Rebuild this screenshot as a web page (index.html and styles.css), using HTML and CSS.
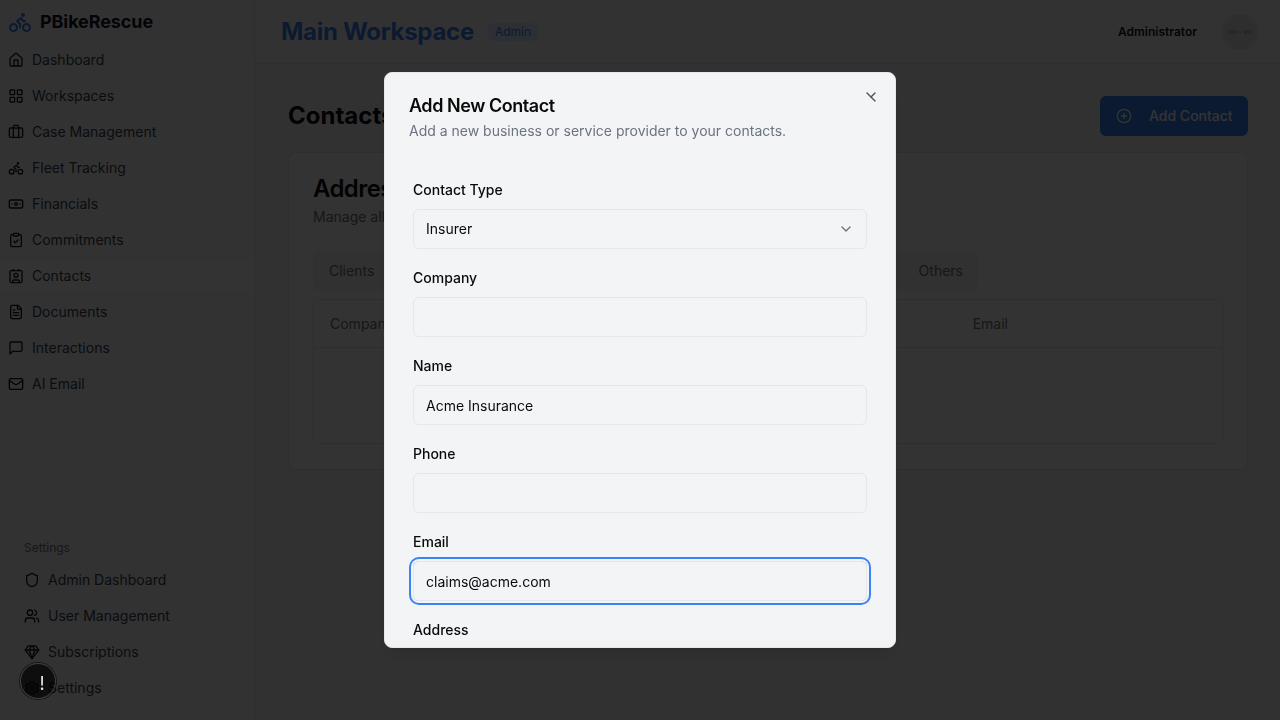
FILE: index.html
```html
<!DOCTYPE html>
<html lang="en">
<head>
    <meta charset="UTF-8">
    <title>Contacts</title>
    <link rel="stylesheet" href="styles.css">
</head>
<body>
<svg class="defs" width="0" height="0">
    <symbol id="i-house" viewBox="0 0 24 24"><path d="M15 21v-8a1 1 0 0 0-1-1h-4a1 1 0 0 0-1 1v8"/><path d="M3 10a2 2 0 0 1 .709-1.528l7-5.999a2 2 0 0 1 2.582 0l7 5.999A2 2 0 0 1 21 10v9a2 2 0 0 1-2 2H5a2 2 0 0 1-2-2z"/></symbol>
    <symbol id="i-grid" viewBox="0 0 24 24"><rect width="7" height="7" x="3" y="3" rx="1"/><rect width="7" height="7" x="14" y="3" rx="1"/><rect width="7" height="7" x="14" y="14" rx="1"/><rect width="7" height="7" x="3" y="14" rx="1"/></symbol>
    <symbol id="i-case" viewBox="0 0 24 24"><path d="M16 20V4a2 2 0 0 0-2-2h-4a2 2 0 0 0-2 2v16"/><rect width="20" height="14" x="2" y="6" rx="2"/></symbol>
    <symbol id="i-bike" viewBox="0 0 24 24"><circle cx="18.5" cy="17.5" r="3.5"/><circle cx="5.5" cy="17.5" r="3.5"/><circle cx="15" cy="5" r="1"/><path d="M12 17.5V14l-3-3 4-3 2 3h2"/></symbol>
    <symbol id="i-note" viewBox="0 0 24 24"><rect width="20" height="12" x="2" y="6" rx="2"/><circle cx="12" cy="12" r="2"/><path d="M6 12h.01M18 12h.01"/></symbol>
    <symbol id="i-check" viewBox="0 0 24 24"><rect width="8" height="4" x="8" y="2" rx="1"/><path d="M16 4h2a2 2 0 0 1 2 2v14a2 2 0 0 1-2 2H6a2 2 0 0 1-2-2V6a2 2 0 0 1 2-2h2"/><path d="m9 14 2 2 4-4"/></symbol>
    <symbol id="i-contact" viewBox="0 0 24 24"><path d="M16 2v2"/><path d="M7 22v-2a2 2 0 0 1 2-2h6a2 2 0 0 1 2 2v2"/><path d="M8 2v2"/><circle cx="12" cy="11" r="3"/><rect width="18" height="18" x="3" y="4" rx="2"/></symbol>
    <symbol id="i-file" viewBox="0 0 24 24"><path d="M15 2H6a2 2 0 0 0-2 2v16a2 2 0 0 0 2 2h12a2 2 0 0 0 2-2V7Z"/><path d="M14 2v4a2 2 0 0 0 2 2h4"/><path d="M10 9H8"/><path d="M16 13H8"/><path d="M16 17H8"/></symbol>
    <symbol id="i-message" viewBox="0 0 24 24"><path d="M21 15a2 2 0 0 1-2 2H7l-4 4V5a2 2 0 0 1 2-2h14a2 2 0 0 1 2 2z"/></symbol>
    <symbol id="i-mail" viewBox="0 0 24 24"><rect width="20" height="16" x="2" y="4" rx="2"/><path d="m22 7-8.97 5.7a1.94 1.94 0 0 1-2.06 0L2 7"/></symbol>
    <symbol id="i-shield" viewBox="0 0 24 24"><path d="M20 13c0 5-3.5 7.5-7.66 8.95a1 1 0 0 1-.67-.01C7.5 20.5 4 18 4 13V6a1 1 0 0 1 1-1c2 0 4.5-1.2 6.24-2.72a1.17 1.17 0 0 1 1.52 0C14.51 3.81 17 5 19 5a1 1 0 0 1 1 1z"/></symbol>
    <symbol id="i-users" viewBox="0 0 24 24"><path d="M16 21v-2a4 4 0 0 0-4-4H6a4 4 0 0 0-4 4v2"/><circle cx="9" cy="7" r="4"/><path d="M22 21v-2a4 4 0 0 0-3-3.87"/><path d="M16 3.13a4 4 0 0 1 0 7.75"/></symbol>
    <symbol id="i-gem" viewBox="0 0 24 24"><path d="M6 3h12l4 6-10 13L2 9Z"/><path d="M11 3 8 9l4 13 4-13-3-6"/><path d="M2 9h20"/></symbol>
    <symbol id="i-gear" viewBox="0 0 24 24"><path d="M12.22 2h-.44a2 2 0 0 0-2 2v.18a2 2 0 0 1-1 1.73l-.43.25a2 2 0 0 1-2 0l-.15-.08a2 2 0 0 0-2.73.73l-.22.38a2 2 0 0 0 .73 2.73l.15.1a2 2 0 0 1 1 1.72v.51a2 2 0 0 1-1 1.74l-.15.09a2 2 0 0 0-.73 2.73l.22.38a2 2 0 0 0 2.73.73l.15-.08a2 2 0 0 1 2 0l.43.25a2 2 0 0 1 1 1.73V20a2 2 0 0 0 2 2h.44a2 2 0 0 0 2-2v-.18a2 2 0 0 1 1-1.73l.43-.25a2 2 0 0 1 2 0l.15.08a2 2 0 0 0 2.73-.73l.22-.39a2 2 0 0 0-.73-2.73l-.15-.08a2 2 0 0 1-1-1.74v-.5a2 2 0 0 1 1-1.74l.15-.09a2 2 0 0 0 .73-2.73l-.22-.38a2 2 0 0 0-2.73-.73l-.15.08a2 2 0 0 1-2 0l-.43-.25a2 2 0 0 1-1-1.73V4a2 2 0 0 0-2-2z"/><circle cx="12" cy="12" r="3"/></symbol>
    <symbol id="i-plus" viewBox="0 0 24 24"><circle cx="12" cy="12" r="10"/><path d="M8 12h8"/><path d="M12 8v8"/></symbol>
    <symbol id="i-x" viewBox="0 0 24 24"><path d="M18 6 12 12"/><path d="m6 6 12 12"/></symbol>
    <symbol id="i-chevron" viewBox="0 0 24 24"><path d="m6 9 6 6 6-6"/></symbol>
</svg>

<div class="app">
    <aside class="sidebar">
        <div class="brand">
            <svg class="icon brand-icon"><use href="#i-bike"/></svg>
            <span>PBikeRescue</span>
        </div>
        <nav class="nav">
            <a class="nav-item"><svg class="icon"><use href="#i-house"/></svg>Dashboard</a>
            <a class="nav-item"><svg class="icon"><use href="#i-grid"/></svg>Workspaces</a>
            <a class="nav-item"><svg class="icon"><use href="#i-case"/></svg>Case Management</a>
            <a class="nav-item"><svg class="icon"><use href="#i-bike"/></svg>Fleet Tracking</a>
            <a class="nav-item"><svg class="icon"><use href="#i-note"/></svg>Financials</a>
            <a class="nav-item"><svg class="icon"><use href="#i-check"/></svg>Commitments</a>
            <a class="nav-item active"><svg class="icon"><use href="#i-contact"/></svg>Contacts</a>
            <a class="nav-item"><svg class="icon"><use href="#i-file"/></svg>Documents</a>
            <a class="nav-item"><svg class="icon"><use href="#i-message"/></svg>Interactions</a>
            <a class="nav-item"><svg class="icon"><use href="#i-mail"/></svg>AI Email</a>
        </nav>
        <div class="nav-settings">
            <div class="nav-label">Settings</div>
            <nav class="nav">
                <a class="nav-item"><svg class="icon"><use href="#i-shield"/></svg>Admin Dashboard</a>
                <a class="nav-item"><svg class="icon"><use href="#i-users"/></svg>User Management</a>
                <a class="nav-item"><svg class="icon"><use href="#i-gem"/></svg>Subscriptions</a>
                <a class="nav-item"><svg class="icon"><use href="#i-gear"/></svg>Settings</a>
            </nav>
        </div>
    </aside>

    <div class="page">
        <header class="topbar">
            <h1 class="workspace">Main Workspace</h1>
            <span class="badge">Admin</span>
            <span class="user">Administrator</span>
            <span class="avatar">100 × 100</span>
        </header>
        <main class="content">
            <div class="content-head">
                <h2 class="content-title">Contacts</h2>
                <button class="add-btn"><svg class="icon"><use href="#i-plus"/></svg>Add Contact</button>
            </div>
            <section class="card">
                <h3 class="card-title">Address Book</h3>
                <p class="card-desc">Manage all your contacts in one place.</p>
                <div class="tabs">
                    <span class="tab">Clients</span>
                    <span class="tab">Others</span>
                </div>
                <div class="table">
                    <div class="table-head">
                        <span>Company</span>
                        <span>Email</span>
                    </div>
                    <div class="table-body"></div>
                </div>
            </section>
        </main>
    </div>
</div>

<div class="overlay"></div>

<div class="modal">
    <svg class="icon modal-close"><use href="#i-x"/></svg>
    <h2 class="modal-title">Add New Contact</h2>
    <p class="modal-desc">Add a new business or service provider to your contacts.</p>
    <form class="form">
        <div class="field">
            <label class="field-label">Contact Type</label>
            <div class="input select">Insurer<svg class="icon"><use href="#i-chevron"/></svg></div>
        </div>
        <div class="field">
            <label class="field-label">Company</label>
            <div class="input"></div>
        </div>
        <div class="field">
            <label class="field-label">Name</label>
            <div class="input">Acme Insurance</div>
        </div>
        <div class="field">
            <label class="field-label">Phone</label>
            <div class="input"></div>
        </div>
        <div class="field">
            <label class="field-label">Email</label>
            <div class="input focused">claims@acme.com</div>
        </div>
        <div class="field">
            <label class="field-label">Address</label>
            <div class="input"></div>
        </div>
    </form>
</div>

<div class="issues"><span>!</span></div>
</body>
</html>
```

FILE: styles.css
```css
* {
    margin: 0;
    padding: 0;
    box-sizing: border-box;
}
html, body {
    height: 100%;
    overflow: hidden;
}
body {
    background: #f3f4f6;
    color: #0a0a0a;
    font-family: Inter, "Liberation Sans", sans-serif;
    font-size: 14px;
    line-height: 20px;
}
.defs {
    position: absolute;
}
.icon {
    width: 16px;
    height: 16px;
    flex: none;
    fill: none;
    stroke: currentColor;
    stroke-width: 2;
    stroke-linecap: round;
    stroke-linejoin: round;
}

/* layout */
.app {
    display: flex;
    height: 720px;
}
.sidebar {
    display: flex;
    flex-direction: column;
    width: 255px;
    height: 720px;
    flex: none;
    padding-bottom: 16px;
    border-right: 1px solid #e5e7eb;
    background: #f9fafb;
}
.brand {
    display: flex;
    align-items: center;
    gap: 8px;
    height: 44px;
    padding-left: 8px;
    font-size: 18px;
    font-weight: 700;
    letter-spacing: -0.1px;
    color: #111827;
}
.brand-icon {
    width: 24px;
    height: 24px;
    color: #3b82f6;
}
.nav {
    display: flex;
    flex-direction: column;
    gap: 4px;
}
.nav-item {
    display: flex;
    align-items: center;
    gap: 8px;
    height: 32px;
    padding-left: 8px;
    color: #374151;
}
.nav-item .icon {
    color: #111827;
}
.nav-item.active {
    background: #ffffff;
}
.nav-settings {
    margin-top: auto;
    padding-left: 16px;
}
.nav-label {
    height: 16px;
    margin-bottom: 8px;
    padding-left: 8px;
    font-size: 12px;
    line-height: 16px;
    color: #6b7280;
}

/* header */
.page {
    flex: 1;
    min-width: 0;
}
.topbar {
    display: flex;
    align-items: center;
    height: 64px;
    padding: 0 22px 0 26px;
    border-bottom: 1px solid #e5e7eb;
    background: #f9fafb;
}
.workspace {
    font-size: 24px;
    line-height: 32px;
    font-weight: 700;
    letter-spacing: -0.3px;
    color: #3b82f6;
}
.badge {
    margin-left: 14px;
    padding: 0 7px;
    border-radius: 6px;
    background: #dbeafe;
    font-size: 12px;
    line-height: 18px;
    color: #3b82f6;
}
.user {
    margin-left: auto;
    padding: 0 10px;
    border: 1px solid #f0f1f3;
    border-radius: 11px;
    font-size: 12px;
    line-height: 20px;
    font-weight: 600;
    color: #111827;
}
.avatar {
    display: flex;
    align-items: center;
    justify-content: center;
    width: 36px;
    height: 36px;
    margin-left: 14px;
    border-radius: 50%;
    background: #e5e7eb;
    font-size: 5px;
    color: #6b7280;
}

/* page content */
.content {
    padding: 32px 32px 0 33px;
}
.content-head {
    display: flex;
    align-items: center;
    justify-content: space-between;
    height: 40px;
    margin-bottom: 16px;
}
.content-title {
    font-size: 24px;
    line-height: 32px;
    font-weight: 700;
}
.add-btn {
    display: flex;
    align-items: center;
    gap: 17px;
    width: 148px;
    height: 40px;
    padding-left: 16px;
    border: 0;
    border-radius: 6px;
    background: #3b82f6;
    color: #fff;
    font: 500 14px/20px Inter, "Liberation Sans", sans-serif;
}
.card {
    height: 318px;
    padding: 24px;
    border: 1px solid #e5e7eb;
    border-radius: 8px;
    background: #ffffff;
}
.card-title {
    font-size: 24px;
    line-height: 24px;
    font-weight: 600;
    letter-spacing: -0.6px;
}
.card-desc {
    margin-top: 6px;
    color: #6b7280;
}
.tabs {
    display: flex;
    justify-content: space-between;
    width: 665px;
    height: 40px;
    margin-top: 24px;
    padding: 0 15px 0 16px;
    border-radius: 6px;
    background: #f3f4f6;
    line-height: 40px;
}
.tab {
    color: #6b7280;
}
.table {
    height: 145px;
    margin-top: 8px;
    border: 1px solid #e5e7eb;
    border-radius: 6px;
}
.table-head {
    display: flex;
    justify-content: space-between;
    height: 48px;
    padding: 0 214px 0 16px;
    border-bottom: 1px solid #e5e7eb;
    line-height: 48px;
    color: #6b7280;
}

/* backdrop */
.overlay {
    position: fixed;
    top: 0;
    left: 0;
    width: 100%;
    height: 100%;
    background: rgba(0, 0, 0, 0.8);
}

/* dialog */
.modal {
    position: fixed;
    top: 72px;
    left: 384px;
    width: 512px;
    height: 576px;
    padding: 19px 24px;
    overflow: hidden;
    border: 1px solid #e5e7eb;
    border-radius: 8px;
    background: #f3f4f6;
    box-shadow: 0 10px 15px -3px rgba(0, 0, 0, 0.1);
}
.modal-close {
    position: absolute;
    top: 16px;
    right: 16px;
    color: #4b5563;
}
.modal-title {
    font-size: 18px;
    line-height: 28px;
    font-weight: 600;
    letter-spacing: -0.45px;
    color: #0a0a0a;
}
.modal-desc {
    margin-top: 1px;
    color: #6b7280;
}
.form {
    display: flex;
    flex-direction: column;
    gap: 19px;
    margin-top: 39px;
    padding: 0 4px;
}
.field-label {
    display: block;
    margin-bottom: 9px;
    font-weight: 500;
    color: #0a0a0a;
}
.input {
    display: flex;
    align-items: center;
    justify-content: space-between;
    height: 40px;
    padding: 2px 12px 0;
    border: 1px solid #e5e7eb;
    border-radius: 6px;
    color: #0a0a0a;
}
.select {
    padding-top: 0;
}
.select .icon {
    color: #6b7280;
}
.input.focused {
    box-shadow: 0 0 0 2px #f3f4f6, 0 0 0 4px #3b82f6;
}

/* dev issues button */
.issues {
    position: fixed;
    left: 20px;
    top: 663px;
    display: flex;
    align-items: center;
    justify-content: center;
    width: 36px;
    height: 36px;
    padding: 6px 0 0 8px;
    border: 1px solid #3f3f3f;
    border-radius: 50%;
    background: rgba(0, 0, 0, 0.72);
    box-shadow: 0 0 0 1px rgba(0, 0, 0, 0.6);
    color: #e8e8e8;
    font-size: 18px;
    line-height: 18px;
    font-weight: 400;
}
```
